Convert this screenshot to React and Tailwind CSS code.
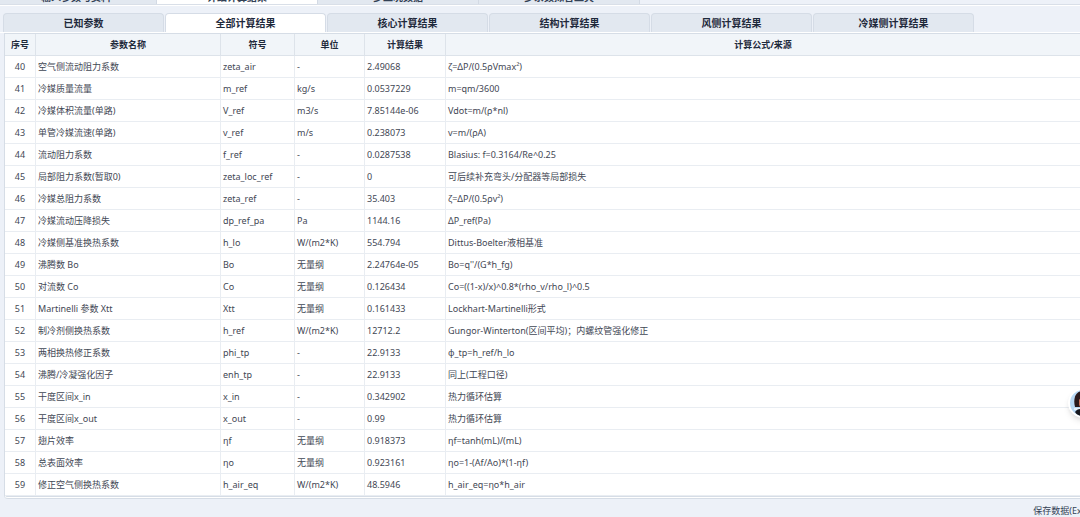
import React, { useState } from 'react';
import clsx from 'clsx';

const mainTabs = ['输入参数与资料', '详细计算结果', '多工况数据', '多系数拟合工具'];
const subTabs = ['已知参数', '全部计算结果', '核心计算结果', '结构计算结果', '风侧计算结果', '冷媒侧计算结果'];
const columns = ['序号', '参数名称', '符号', '单位', '计算结果', '计算公式/来源'];

const rows = [
  [40, '空气侧流动阻力系数', 'zeta_air', '-', '2.49068', 'ζ=ΔP/(0.5ρVmax²)'],
  [41, '冷媒质量流量', 'm_ref', 'kg/s', '0.0537229', 'm=qm/3600'],
  [42, '冷媒体积流量(单路)', 'V_ref', 'm3/s', '7.85144e-06', 'Vdot=m/(ρ*nl)'],
  [43, '单管冷媒流速(单路)', 'v_ref', 'm/s', '0.238073', 'v=m/(ρA)'],
  [44, '流动阻力系数', 'f_ref', '-', '0.0287538', 'Blasius: f=0.3164/Re^0.25'],
  [45, '局部阻力系数(暂取0)', 'zeta_loc_ref', '-', '0', '可后续补充弯头/分配器等局部损失'],
  [46, '冷媒总阻力系数', 'zeta_ref', '-', '35.403', 'ζ=ΔP/(0.5ρv²)'],
  [47, '冷媒流动压降损失', 'dp_ref_pa', 'Pa', '1144.16', 'ΔP_ref(Pa)'],
  [48, '冷媒侧基准换热系数', 'h_lo', 'W/(m2*K)', '554.794', 'Dittus-Boelter液相基准'],
  [49, '沸腾数 Bo', 'Bo', '无量纲', '2.24764e-05', "Bo=q''/(G*h_fg)"],
  [50, '对流数 Co', 'Co', '无量纲', '0.126434', 'Co=((1-x)/x)^0.8*(rho_v/rho_l)^0.5'],
  [51, 'Martinelli 参数 Xtt', 'Xtt', '无量纲', '0.161433', 'Lockhart-Martinelli形式'],
  [52, '制冷剂侧换热系数', 'h_ref', 'W/(m2*K)', '12712.2', 'Gungor-Winterton(区间平均)；内螺纹管强化修正'],
  [53, '两相换热修正系数', 'phi_tp', '-', '22.9133', 'φ_tp=h_ref/h_lo'],
  [54, '沸腾/冷凝强化因子', 'enh_tp', '-', '22.9133', '同上(工程口径)'],
  [55, '干度区间x_in', 'x_in', '-', '0.342902', '热力循环估算'],
  [56, '干度区间x_out', 'x_out', '-', '0.99', '热力循环估算'],
  [57, '翅片效率', 'ηf', '无量纲', '0.918373', 'ηf=tanh(mL)/(mL)'],
  [58, '总表面效率', 'ηo', '无量纲', '0.923161', 'ηo=1-(Af/Ao)*(1-ηf)'],
  [59, '修正空气侧换热系数', 'h_air_eq', 'W/(m2*K)', '48.5946', 'h_air_eq=ηo*h_air'],
];

function MainTabs() {
  return (
    <nav className="flex h-[5px] items-end overflow-hidden border-b border-[#d9dfe8] text-[10px] leading-[14px]">
      {mainTabs.map((tab, i) => (
        <button
          key={tab}
          type="button"
          className={clsx(
            'flex h-5 w-[161px] shrink-0 items-end justify-center border-r border-[#d3dae4] font-bold text-[#334155] first:-ml-1',
            i === 1 ? 'bg-white' : 'bg-[#e2e8f0]'
          )}
        >
          {tab}
        </button>
      ))}
    </nav>
  );
}

function SubTabs({ active, onChange }) {
  return (
    <div role="tablist" className="flex gap-px border-t border-b border-white px-[3px] pt-[7px]">
      {subTabs.map((tab, i) => (
        <button
          key={tab}
          type="button"
          role="tab"
          aria-selected={active === i}
          onClick={() => onChange(i)}
          className={clsx(
            'h-[19px] w-[161px] shrink-0 rounded-t-sm border border-b-0 border-[#d5dce6] text-[10px] leading-4 font-bold text-[#1e293b]',
            active === i ? 'bg-white' : 'bg-[#e2e8f0]'
          )}
        >
          {tab}
        </button>
      ))}
    </div>
  );
}

function ResultTable() {
  return (
    <table className="w-full table-fixed border-separate border-spacing-0 text-[9px] leading-3 text-[#3f4754]">
      <colgroup>
        <col className="w-[31px]" />
        <col className="w-[185px]" />
        <col className="w-[74px]" />
        <col className="w-[70px]" />
        <col className="w-[81px]" />
        <col />
      </colgroup>
      <thead>
        <tr className="h-[22px] bg-[#f1f5f9]">
          {columns.map((name) => (
            <th key={name} className="border-r border-b border-[#dde3ea] p-0 font-bold text-[#1e293b] last:border-r-0">
              {name}
            </th>
          ))}
        </tr>
      </thead>
      <tbody>
        {rows.map((row) => (
          <tr key={row[0]} className="h-[22px]">
            {row.map((cell, i) => (
              <td
                key={columns[i]}
                className={clsx(
                  'border-r border-b border-[#e9edf2] p-0 whitespace-nowrap last:border-r-0',
                  i === 0 ? 'text-center' : 'pl-[2px]'
                )}
              >
                {cell}
              </td>
            ))}
          </tr>
        ))}
      </tbody>
    </table>
  );
}

function Avatar() {
  return (
    <button
      type="button"
      aria-label="助手"
      className="absolute top-[388px] -right-[18px] size-[30px] overflow-hidden rounded-full border-2 border-white bg-[#b9d9f5] shadow-md"
    >
      <svg viewBox="0 0 26 26" className="size-full">
        <path d="M5 17C3 9 5 1 13 1s10 8 8 16z" fill="#2b1a1c" />
        <path d="M9 10c2-3 6-3 8 0v5c-2 4-6 4-8 0z" fill="#c96f58" />
        <path d="M4 18h18v2H4z" fill="#e8f0fa" />
        <path d="M5 22c2-3 5-3 8-3s6 0 8 3l-3 4H8z" fill="#17181f" />
      </svg>
    </button>
  );
}

export default function App() {
  const [active, setActive] = useState(1);

  return (
    <div className="relative min-h-screen overflow-hidden bg-[#edf1f8] font-['Noto_Sans','Noto_Sans_CJK_SC',sans-serif]">
      <MainTabs />
      <SubTabs active={active} onChange={setActive} />
      <main className="ml-1 rounded-bl-sm border-t border-b-3 border-l border-[#d6dde6] bg-white [border-bottom-style:double]">
        <ResultTable />
      </main>
      <footer className="flex justify-end pt-1">
        <button type="button" className="-mr-4 text-[9px] leading-4 text-[#334155]">
          保存数据(Excel)
        </button>
      </footer>
      <Avatar />
    </div>
  );
}
